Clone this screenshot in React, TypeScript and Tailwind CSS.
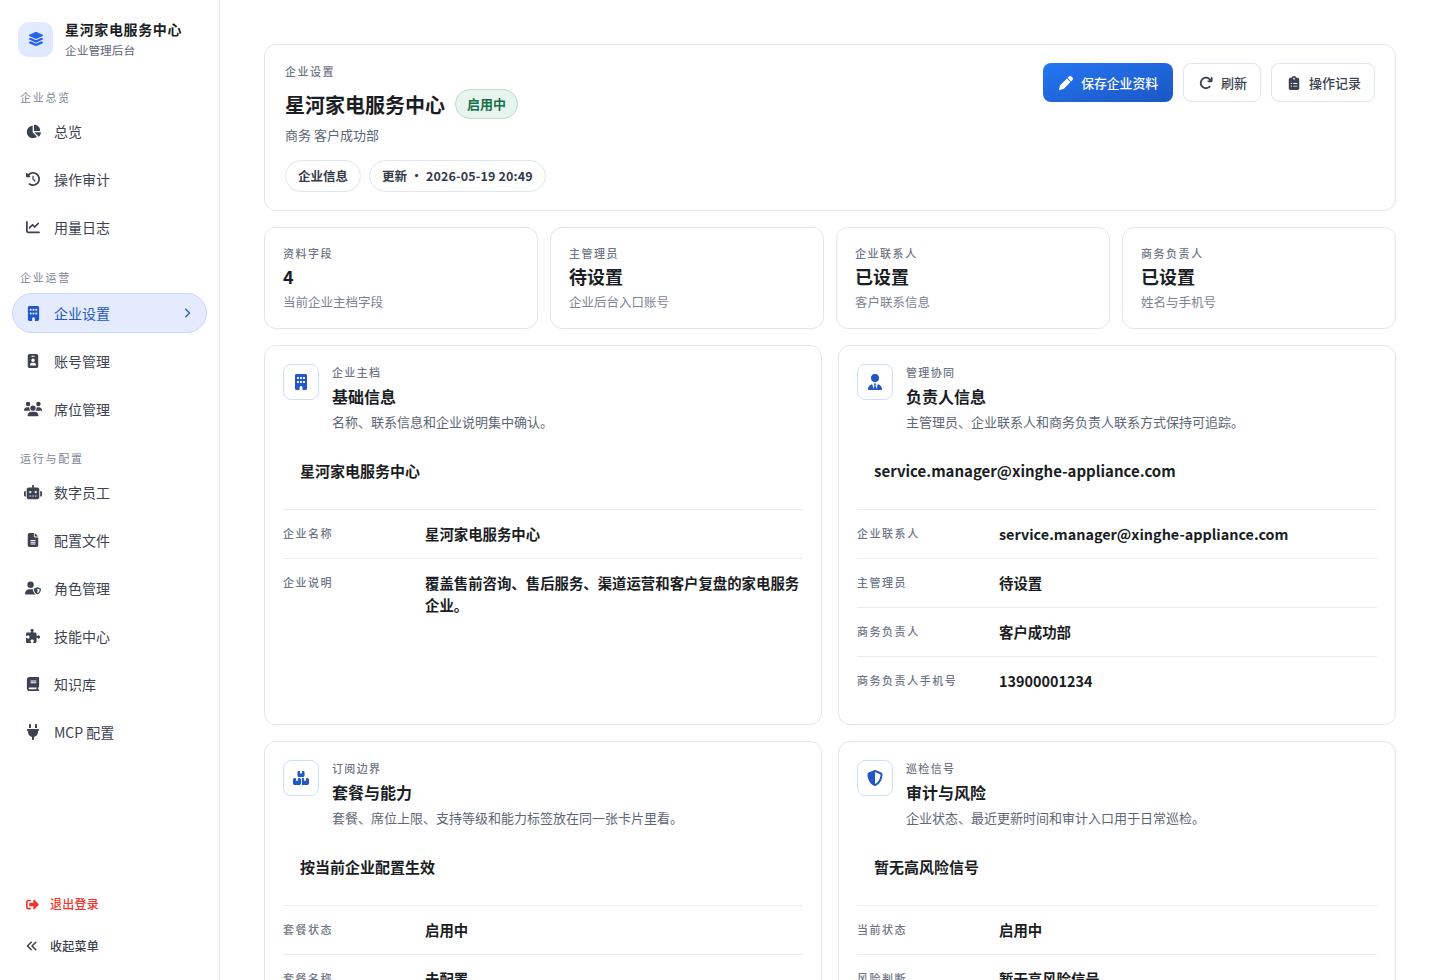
import type { ReactNode } from 'react';
import { FaSignOutAlt } from 'react-icons/fa';
import {
  FaAnglesLeft,
  FaArrowRotateRight,
  FaBook,
  FaBoxesStacked,
  FaBuilding,
  FaChartLine,
  FaChartPie,
  FaChevronRight,
  FaClipboardList,
  FaClockRotateLeft,
  FaFileLines,
  FaIdBadge,
  FaLayerGroup,
  FaPen,
  FaPlug,
  FaPuzzlePiece,
  FaRobot,
  FaShieldHalved,
  FaUsers,
  FaUserShield,
  FaUserTie,
} from 'react-icons/fa6';

function NavItem({ icon, label, active }: { icon: ReactNode; label: string; active?: boolean }) {
  return (
    <div
      className={
        active
          ? 'flex h-10 items-center rounded-full border border-[#c9d8f8] bg-[#e4ebfd] pl-3 pr-[14px] text-sm text-[#2257c5]'
          : 'flex h-10 items-center border border-transparent pl-3 pr-[14px] text-sm text-[#3c4350]'
      }
    >
      <span className="flex h-4 w-4 items-center justify-center">{icon}</span>
      <span className="ml-[13px] flex-1">{label}</span>
      {active && <FaChevronRight className="text-[10px]" />}
    </div>
  );
}

function SectionLabel({ children }: { children: ReactNode }) {
  return <div className="h-[18px] pl-2 text-[11px] leading-[18px] tracking-[0.16em] text-[#7b8494]">{children}</div>;
}

function Stat({ label, value, note }: { label: string; value: string; note: string }) {
  return (
    <div className="h-[102px] rounded-xl border border-[#dfe5f0] bg-white px-[18px] pt-[16px]">
      <div className="text-[11px] font-medium leading-[18px] tracking-[0.14em] text-[#6e7685]">{label}</div>
      <div className="mt-px text-[18px] font-bold leading-[26px] text-[#1a1d23]">{value}</div>
      <div className="mt-[3px] text-[12.5px] leading-[20px] text-[#7b8494]">{note}</div>
    </div>
  );
}

function Row({ label, value }: { label: string; value: string }) {
  return (
    <div className="grid grid-cols-[142px_1fr] border-t border-[#e7ebf3] pt-[13px] pb-[13px]">
      <div className="text-[11px] font-medium leading-[20px] tracking-[0.14em] text-[#6e7685]">{label}</div>
      <div className="text-[14.4px] font-semibold leading-[22px] text-[#1a1d23]">{value}</div>
    </div>
  );
}

function Panel({
  icon,
  eyebrow,
  title,
  desc,
  highlight,
  rows,
}: {
  icon: ReactNode;
  eyebrow: string;
  title: string;
  desc: string;
  highlight: string;
  rows: { label: string; value: string }[];
}) {
  return (
    <div className="h-[380px] rounded-xl border border-[#dfe5f0] bg-white px-[18px] pt-[18px]">
      <div className="flex gap-[13px]">
        <div className="flex h-[36px] w-[36px] shrink-0 items-center justify-center rounded-lg border border-[#cfe0fb] bg-white text-base text-[#2257c5]">
          {icon}
        </div>
        <div className="-mt-px">
          <div className="text-[11px] font-medium leading-[18px] tracking-[0.12em] text-[#6e7685]">{eyebrow}</div>
          <div className="mt-[3px] text-base font-bold leading-[24px] text-[#1a1d23]">{title}</div>
          <div className="mt-[4px] text-[13px] leading-[20px] text-[#5d6675]">{desc}</div>
        </div>
      </div>
      <div className="px-[17px] pt-[27px] pb-[26px] text-[15px] font-semibold leading-[24px] text-[#1a1d23]">{highlight}</div>
      <div>
        {rows.map((r) => (
          <Row key={r.label} label={r.label} value={r.value} />
        ))}
      </div>
    </div>
  );
}

function ActionButton({ icon, label }: { icon: ReactNode; label: string }) {
  return (
    <button className="flex h-[39px] items-center gap-2 rounded-lg border border-[#dfe5f0] bg-white pl-[15px] pr-[13px] text-[13px] font-medium text-[#3c4350]">
      <span className="flex w-[14px] justify-center text-sm">{icon}</span>
      {label}
    </button>
  );
}

export default function App() {
  return (
    <div className="flex h-[980px] overflow-hidden bg-white font-['Noto_Sans_CJK_SC','Noto_Sans',sans-serif]">
      <aside className="flex w-[220px] shrink-0 flex-col border-r border-[#e4e8f1] bg-white px-3">
        <div className="flex items-center gap-[12px] pl-[6px] pt-[19px]">
          <div className="flex h-[35px] w-[35px] items-center justify-center rounded-[10px] bg-gradient-to-br from-[#e6eefe] to-[#dbe6fd] text-base text-[#2563eb]">
            <FaLayerGroup />
          </div>
          <div>
            <div className="text-sm font-bold leading-[20px] tracking-[0.045em] text-[#1a1d23]">星河家电服务中心</div>
            <div className="mt-[2px] text-[11.7px] leading-[18px] text-[#5d6675]">企业管理后台</div>
          </div>
        </div>

        <div className="mt-[29px]">
          <SectionLabel>企业总览</SectionLabel>
          <div className="mt-[5px] flex flex-col gap-2">
            <NavItem icon={<FaChartPie className="shrink-0 text-[15px]" />} label="总览" />
            <NavItem icon={<FaClockRotateLeft className="shrink-0 text-[14px]" />} label="操作审计" />
            <NavItem icon={<FaChartLine className="shrink-0 text-[14px]" />} label="用量日志" />
          </div>
        </div>

        <div className="mt-[21px]">
          <SectionLabel>企业运营</SectionLabel>
          <div className="mt-[7px] flex flex-col gap-2">
            <NavItem icon={<FaBuilding className="shrink-0 text-[15px]" />} label="企业设置" active />
            <NavItem icon={<FaIdBadge className="shrink-0 text-[14px]" />} label="账号管理" />
            <NavItem icon={<FaUsers className="shrink-0 text-[18px]" />} label="席位管理" />
          </div>
        </div>

        <div className="mt-[20px]">
          <SectionLabel>运行与配置</SectionLabel>
          <div className="mt-[5px] flex flex-col gap-2">
            <NavItem icon={<FaRobot className="shrink-0 text-[18px]" />} label="数字员工" />
            <NavItem icon={<FaFileLines className="shrink-0 text-[14px]" />} label="配置文件" />
            <NavItem icon={<FaUserShield className="shrink-0 text-[16px]" />} label="角色管理" />
            <NavItem icon={<FaPuzzlePiece className="shrink-0 text-[14px]" />} label="技能中心" />
            <NavItem icon={<FaBook className="shrink-0 text-[14px]" />} label="知识库" />
            <NavItem icon={<FaPlug className="shrink-0 text-[16px]" />} label="MCP 配置" />
          </div>
        </div>

        <div className="mt-auto flex flex-col gap-[2px] pb-[14px] text-xs font-medium tracking-[0.02em]">
          <div className="flex h-10 items-center gap-[11px] pl-[14px] text-[#f0352f]">
            <FaSignOutAlt className="text-[13px]" />
            <span>退出登录</span>
          </div>
          <div className="flex h-10 items-center gap-[12px] pl-[14px] text-[#3c4350]">
            <FaAnglesLeft className="text-[12px]" />
            <span>收起菜单</span>
          </div>
        </div>
      </aside>

      <main className="flex min-w-0 flex-1 flex-col gap-4 px-[44px] pt-[44px]">
        <section className="flex h-[167px] shrink-0 justify-between rounded-xl border border-[#dfe5f0] bg-white px-5 pt-[17px]">
          <div>
            <div className="text-[11px] font-medium leading-[18px] tracking-[0.14em] text-[#6e7685]">企业设置</div>
            <div className="mt-[9px] flex items-center gap-[10px]">
              <h1 className="text-xl font-bold leading-[32px] text-[#1a1d23]">星河家电服务中心</h1>
              <span className="mb-[2px] rounded-full border border-[#b7dcc9] bg-[#e7f5ee] px-[11px] text-[13px] font-semibold leading-[28px] text-[#17704a]">启用中</span>
            </div>
            <div className="mt-[4px] text-[13px] leading-[20px] text-[#5d6675]">商务 客户成功部</div>
            <div className="mt-[15px] flex gap-2">
              <span className="rounded-full border border-[#dfe5f0] px-[12px] text-[12.5px] font-semibold leading-[30px] text-[#343b48]">企业信息</span>
              <span className="flex rounded-full border border-[#dfe5f0] px-[12px] text-[12.5px] font-semibold leading-[30px] text-[#343b48]">
                <span>更新</span>
                <span className="w-[19px] text-center">·</span>
                <span className="tracking-[0.01em]">2026-05-19 20:49</span>
              </span>
            </div>
          </div>
          <div className="mt-px flex gap-[10px]">
            <button className="flex h-[39px] items-center gap-2 rounded-lg bg-gradient-to-br from-[#2577f5] to-[#1b56c4] pl-4 pr-[15px] text-[12.8px] font-medium text-white">
              <FaPen className="h-[14px] w-[14px]" />
              保存企业资料
            </button>
            <ActionButton icon={<FaArrowRotateRight />} label="刷新" />
            <ActionButton icon={<FaClipboardList />} label="操作记录" />
          </div>
        </section>

        <section className="grid shrink-0 grid-cols-4 gap-3">
          <Stat label="资料字段" value="4" note="当前企业主档字段" />
          <Stat label="主管理员" value="待设置" note="企业后台入口账号" />
          <Stat label="企业联系人" value="已设置" note="客户联系信息" />
          <Stat label="商务负责人" value="已设置" note="姓名与手机号" />
        </section>

        <section className="grid shrink-0 grid-cols-2 gap-4">
          <Panel
            icon={<FaBuilding />}
            eyebrow="企业主档"
            title="基础信息"
            desc="名称、联系信息和企业说明集中确认。"
            highlight="星河家电服务中心"
            rows={[
              { label: '企业名称', value: '星河家电服务中心' },
              { label: '企业说明', value: '覆盖售前咨询、售后服务、渠道运营和客户复盘的家电服务企业。' },
            ]}
          />
          <Panel
            icon={<FaUserTie />}
            eyebrow="管理协同"
            title="负责人信息"
            desc="主管理员、企业联系人和商务负责人联系方式保持可追踪。"
            highlight="service.manager@xinghe-appliance.com"
            rows={[
              { label: '企业联系人', value: 'service.manager@xinghe-appliance.com' },
              { label: '主管理员', value: '待设置' },
              { label: '商务负责人', value: '客户成功部' },
              { label: '商务负责人手机号', value: '13900001234' },
            ]}
          />
        </section>

        <section className="grid shrink-0 grid-cols-2 gap-4">
          <Panel
            icon={<FaBoxesStacked />}
            eyebrow="订阅边界"
            title="套餐与能力"
            desc="套餐、席位上限、支持等级和能力标签放在同一张卡片里看。"
            highlight="按当前企业配置生效"
            rows={[
              { label: '套餐状态', value: '启用中' },
              { label: '套餐名称', value: '未配置' },
            ]}
          />
          <Panel
            icon={<FaShieldHalved />}
            eyebrow="巡检信号"
            title="审计与风险"
            desc="企业状态、最近更新时间和审计入口用于日常巡检。"
            highlight="暂无高风险信号"
            rows={[
              { label: '当前状态', value: '启用中' },
              { label: '风险判断', value: '暂无高风险信号' },
            ]}
          />
        </section>
      </main>
    </div>
  );
}
